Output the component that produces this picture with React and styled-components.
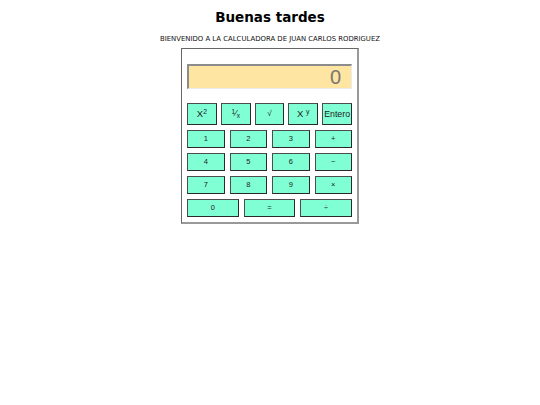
import React from "react";
import styled, { createGlobalStyle } from "styled-components";

const Global = createGlobalStyle`
  html, body { margin: 0; padding: 0; background: #fff; }
  body { font-family: "DejaVu Sans", Verdana, sans-serif; }
`;

const Page = styled.div`
  display: flex;
  flex-direction: column;
  align-items: center;
  padding-top: 9.3px;
`;

const Title = styled.h1`
  margin: 0;
  font-family: "DejaVu Sans", Verdana, sans-serif;
  font-weight: bold;
  font-size: 13.5px;
  line-height: 16px;
  color: #000;
`;

const Subtitle = styled.p`
  margin: 10px 0 0;
  font-family: "DejaVu Sans", Verdana, sans-serif;
  font-size: 6.9px;
  line-height: 8px;
  color: #111;
`;

const Calculator = styled.div`
  margin-top: 4.7px;
  width: 165px;
  padding: 15px 5px 5px 5px;
  border-top: 1px solid #666;
  border-left: 1px solid #666;
  border-right: 2px solid #999;
  border-bottom: 2px solid #999;
  display: flex;
  flex-direction: column;
  background: #fff;
`;

const Display = styled.div`
  box-sizing: border-box;
  height: 25px;
  background: #fee5a1;
  border-top: 2px solid #8c8c8c;
  border-left: 2px solid #8c8c8c;
  border-right: 1px solid #ececec;
  border-bottom: 1px solid #ececec;
  padding-right: 10px;
  text-align: right;
  font-family: "Liberation Sans", Arial, sans-serif;
  font-size: 20px;
  line-height: 22px;
  color: #777;
  margin-bottom: 14px;
`;

const Row = styled.div`
  display: grid;
  grid-template-columns: repeat(${(p) => p.$cols}, 1fr);
  column-gap: ${(p) => p.$gap}px;
  margin-bottom: ${(p) => (p.$last ? 0 : 5)}px;
`;

const Key = styled.button`
  box-sizing: border-box;
  height: ${(p) => p.$h}px;
  margin: 0;
  padding: 0;
  background: #80ffd4;
  border: 1px solid #4d4d4d;
  border-right-color: #2a2a2a;
  border-bottom-color: #2a2a2a;
  font-family: "Liberation Sans", Arial, sans-serif;
  font-size: ${(p) => p.$fs || 7.5}px;
  color: #222;
  display: flex;
  align-items: center;
  justify-content: center;
  line-height: 1;
`;

const Label = styled.span`
  white-space: pre;
`;

const Sup = styled.span`
  font-size: 0.72em;
  position: relative;
  top: -0.45em;
`;

const Sub = styled.span`
  font-size: 0.72em;
  position: relative;
  top: 0.2em;
`;

export default function App() {
  return (
    <>
      <Global />
      <Page>
        <Title>Buenas tardes</Title>
        <Subtitle>BIENVENIDO A LA CALCULADORA DE JUAN CARLOS RODRIGUEZ</Subtitle>
        <Calculator>
          <Display>0</Display>
          <Row $cols={5} $gap={4}>
            <Key $h={22} $fs={9.5}>
              <Label>
                X<Sup>2</Sup>
              </Label>
            </Key>
            <Key $h={22} $fs={9}>
              <Label>
                <Sup>1</Sup>⁄<Sub>x</Sub>
              </Label>
            </Key>
            <Key $h={22} $fs={8}>
              <Label>√</Label>
            </Key>
            <Key $h={22} $fs={9.5}>
              <Label>
                {"X "}
                <Sup>y</Sup>
              </Label>
            </Key>
            <Key $h={22} $fs={8.8}>
              <Label>Entero</Label>
            </Key>
          </Row>
          <Row $cols={4} $gap={5}>
            <Key $h={18}>1</Key>
            <Key $h={18}>2</Key>
            <Key $h={18}>3</Key>
            <Key $h={18}>+</Key>
          </Row>
          <Row $cols={4} $gap={5}>
            <Key $h={18}>4</Key>
            <Key $h={18}>5</Key>
            <Key $h={18}>6</Key>
            <Key $h={18}>−</Key>
          </Row>
          <Row $cols={4} $gap={5}>
            <Key $h={18}>7</Key>
            <Key $h={18}>8</Key>
            <Key $h={18}>9</Key>
            <Key $h={18}>×</Key>
          </Row>
          <Row $cols={3} $gap={5} $last>
            <Key $h={18}>0</Key>
            <Key $h={18}>=</Key>
            <Key $h={18}>÷</Key>
          </Row>
        </Calculator>
      </Page>
    </>
  );
}
